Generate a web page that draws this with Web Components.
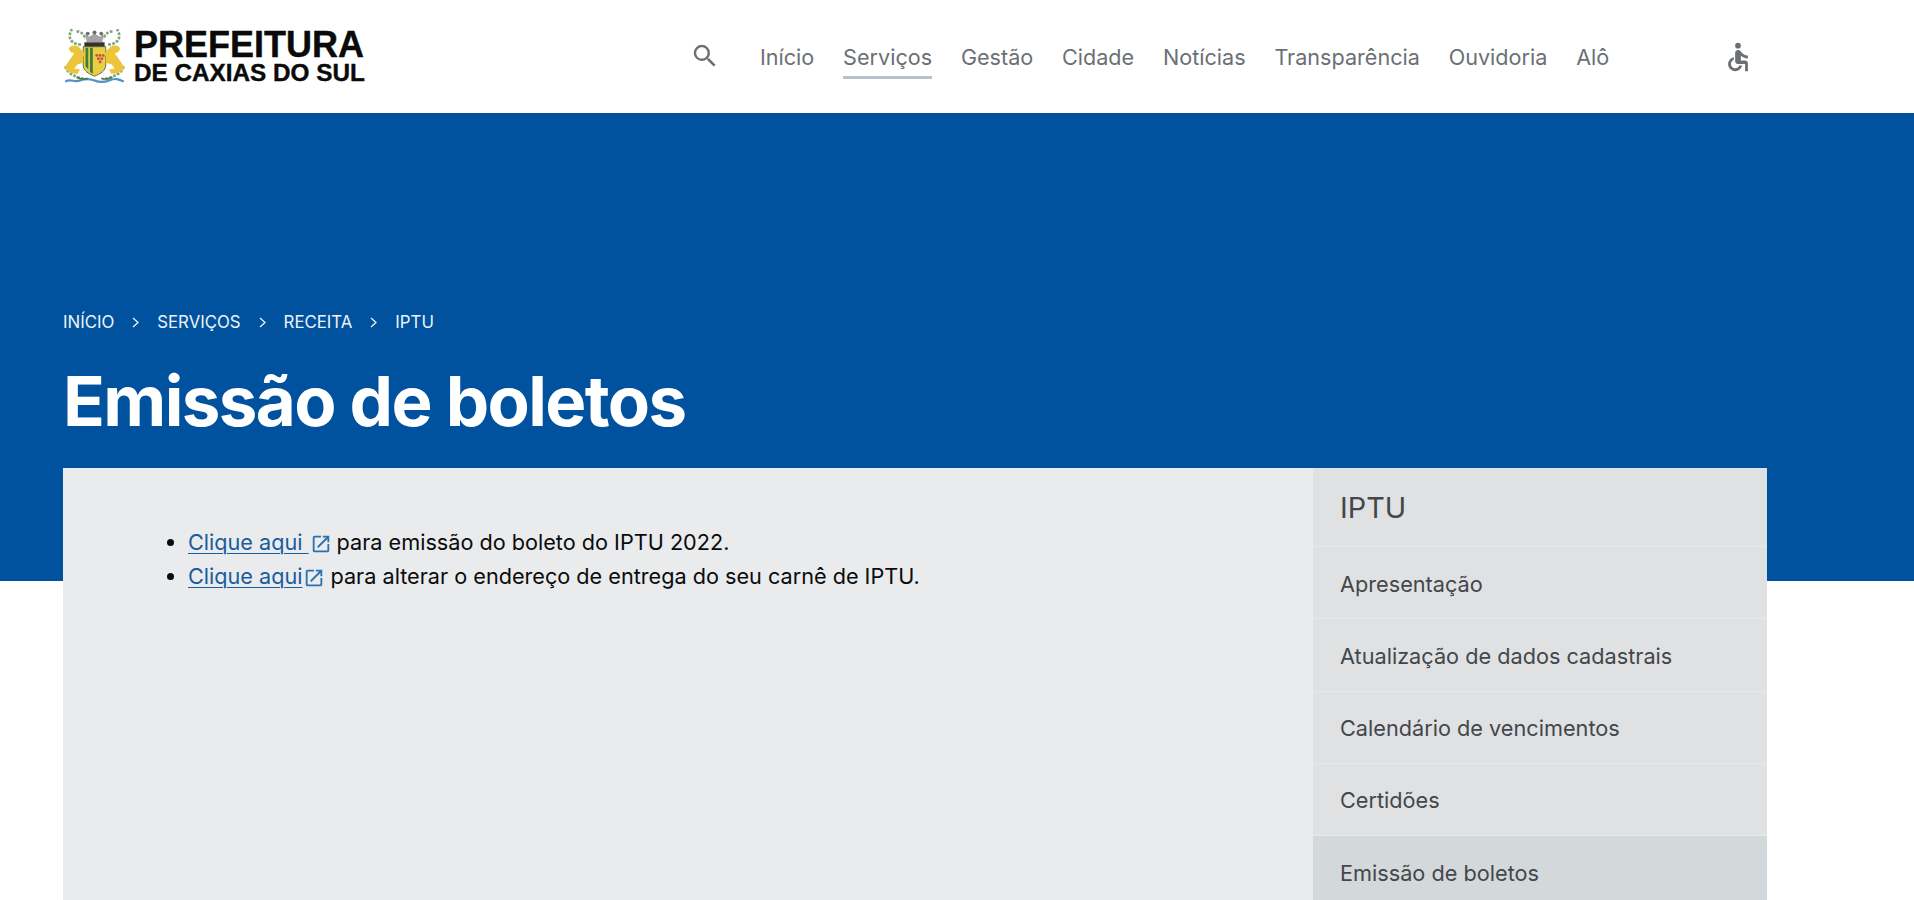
<!DOCTYPE html>
<html lang="pt-BR"><head><meta charset="utf-8"><title>Emissão de boletos</title>
<style>
html,body{margin:0;padding:0;height:900px;overflow:hidden;background:#fff;font-family:Inter,"Liberation Sans",sans-serif}
</style></head><body>
<site-header></site-header>
<page-hero></page-hero>
<content-card>
  <ul-content></ul-content>
  <side-menu slot="side"></side-menu>
</content-card>
<script>
const def=(name,html)=>customElements.define(name,class extends HTMLElement{constructor(){super();this.attachShadow({mode:'open'}).innerHTML=html}});
def('site-logo',`<style>
:host{display:flex;align-items:center;width:302px;height:113px;font-family:"Liberation Sans",Arial,sans-serif;color:#0a0a0a;flex:none}
svg{width:63px;height:59px;flex:none;margin-right:8px;filter:blur(.35px)}
.t{display:flex;flex-direction:column;font-weight:700;white-space:nowrap;-webkit-text-stroke:.4px #0a0a0a;padding-top:2px}
.a{font-size:36px;line-height:31px}.b{font-size:24.300px;line-height:26px}
</style>
<svg viewBox="3 1 56 54" preserveAspectRatio="none">
<g fill="none" stroke="#7fa67f" stroke-width="2.400" stroke-dasharray="2.500 1.200">
<path d="M19 17C11 17 6 11 11 3"/><path d="M43 17c8 0 13-6 8-14"/><path d="M15 5c4 0 7 3 8 7"/><path d="M47 5c-4 0-7 3-8 7"/>
<path d="M5 37c2 7 10 10 18 12"/><path d="M57 37c-2 7-10 10-18 12"/></g>
<path d="M23 7l3 3 5-3 5 3 3-3-1 8H24z" fill="#a3a4a6"/><circle cx="25" cy="7" r="1.700" fill="#6d6e72"/><circle cx="31" cy="6" r="1.800" fill="#6d6e72"/><circle cx="37" cy="7" r="1.700" fill="#6d6e72"/>
<path d="M22 15h18v5H22z" fill="#333"/>
<path d="M21 19h20v17c0 5-5 8-10 10-5-2-10-5-10-10z" fill="#e6cf45" stroke="#5a6438" stroke-width=".8"/>
<path d="M23 20h2.500v20l-2.500-3zM27 20h2.500v24l-2.500-2z" fill="#3f7d3c"/>
<g fill="#c9503f"><circle cx="33" cy="27" r="1.300"/><circle cx="36" cy="27" r="1.300"/><circle cx="39" cy="27" r="1.300"/><circle cx="34.500" cy="30" r="1.300"/><circle cx="37.500" cy="30" r="1.300"/><circle cx="36" cy="33" r="1.300"/></g>
<path d="M17 19c-4-2-8-1-9 2l2 3 3 1-4 6-4 6c-1 3 2 5 5 6l6 1 2-4-5-1 3-4 5-1 0-6 2-2z" fill="#ecc53a"/>
<path d="M45 19c4-2 8-1 9 2l-2 3-3 1 4 6 4 6c1 3-2 5-5 6l-6 1-2-4 5-1-3-4-5-1 0-6-2-2z" fill="#ecc53a"/>
<path d="M5 51c5-3 8 1 13-1s8-2 13 0 8 2 13 0 8-2 13 1" fill="none" stroke="#4f91c8" stroke-width="2"/>
<path d="M15 47c4 2 7 2 10 1M47 47c-4 2-7 2-10 1" fill="none" stroke="#4d7a4d" stroke-width="1.500"/>
</svg>
<div class="t"><span class="a">PREFEITURA</span><span class="b">DE CAXIAS DO SUL</span></div>`);
def('nav-link',`<style>
:host{display:block;font-size:21.600px;line-height:30px;color:#6b7075;padding-bottom:4px;border-bottom:3px solid transparent;white-space:nowrap}
:host([active]){border-bottom-color:#b8c1ca}
</style><slot></slot>`);
def('site-header',`<style>
:host{display:flex;align-items:center;height:113px;padding-left:63px;background:#fff;box-sizing:border-box}
.s{width:30px;height:30px;flex:none;margin:-2px 0 0 325px;color:#6b7075}
nav{display:flex;gap:28.800px;margin-left:40px;margin-top:7px}
.w{width:34px;height:34px;flex:none;margin:1px 0 0 112px;color:#6b7075}
</style>
<site-logo></site-logo>
<svg class="s" viewBox="0 0 24 24"><path fill="currentColor" d="M15.500 14h-.79l-.28-.27A6.470 6.470 0 0 0 16 9.500 6.500 6.500 0 1 0 9.500 16c1.610 0 3.090-.59 4.230-1.570l.27.28v.79l5 4.990L20.490 19l-4.990-5zm-6 0C7.010 14 5 11.990 5 9.500S7.010 5 9.500 5 14 7.010 14 9.500 11.990 14 9.500 14z"/></svg>
<nav><nav-link>Início</nav-link><nav-link active>Serviços</nav-link><nav-link>Gestão</nav-link><nav-link>Cidade</nav-link><nav-link>Notícias</nav-link><nav-link>Transparência</nav-link><nav-link>Ouvidoria</nav-link><nav-link>Alô</nav-link></nav>
<svg class="w" viewBox="0 0 24 24"><circle cx="12" cy="4" r="2" fill="currentColor"/><path fill="currentColor" d="M19 13v-2c-1.540.02-3.090-.75-4.070-1.830l-1.290-1.430c-.17-.19-.38-.34-.61-.45-.01 0-.01-.01-.02-.01H13c-.35-.2-.75-.3-1.190-.26C10.760 7.110 10 8.040 10 9.090V15c0 1.100.9 2 2 2h5v5h2v-5.500c0-1.100-.9-2-2-2h-3v-3.450c1.290 1.070 3.250 1.940 5 1.950zm-6.170 5c-.41 1.160-1.520 2-2.830 2-1.660 0-3-1.340-3-3 0-1.310.84-2.410 2-2.830V12.100c-2.280.46-4 2.480-4 4.900 0 2.760 2.240 5 5 5 2.420 0 4.440-1.720 4.900-4h-2.070z"/></svg>`);
const chev=`<svg viewBox="0 0 9 13"><path d="M2 2l5 4.500-5 4.500" fill="none" stroke="#eef3f8" stroke-width="1.300"/></svg>`;
def('page-hero',`<style>
:host{display:block;height:468px;background:#00529e;color:#fff;box-sizing:border-box;padding:197px 0 0 63px;margin-bottom:-113px}
.c{display:flex;align-items:center;font-size:16.800px;line-height:24px;color:#eef3f8;height:24px}
.c svg{width:9px;height:13px;margin:0 17px}
h1{margin:25px 0 0;font-size:69px;line-height:84px;font-weight:700;letter-spacing:-1.620px}
</style>
<div class="c"><span>INÍCIO</span>${chev}<span>SERVIÇOS</span>${chev}<span>RECEITA</span>${chev}<span>IPTU</span></div>
<h1>Emissão de boletos</h1>`);
def('content-card',`<style>
:host{display:grid;grid-template-columns:1fr 454px;width:1704px;margin-left:63px;height:432px;background:#e9ebed;overflow:hidden;position:relative}
</style><div><slot></slot></div><slot name="side"></slot>`);
const ext=(l,r)=>`<svg style="margin-left:${l}px;margin-right:${r}px" viewBox="0 0 24 24"><path fill="#2d72ad" d="M19 19H5V5h7V3H5a2 2 0 0 0-2 2v14a2 2 0 0 0 2 2h14c1.100 0 2-.9 2-2v-7h-2v7zM14 3v2h3.590l-9.830 9.830 1.410 1.410L19 6.410V10h2V3h-7z"/></svg>`;
def('ul-content',`<style>
:host{display:block;color:#0b0b0b;font-size:21.650px;line-height:34px}
ul{margin:0;padding:57px 0 0 125px}
a{color:#1a5c9c;text-decoration:underline;text-underline-offset:3px;text-decoration-thickness:1px}
svg{width:22px;height:22px;vertical-align:-5px}
</style><ul><li><a href="#">Clique aqui </a>${ext(1,5)}para emissão do boleto do IPTU 2022.</li><li><a href="#">Clique aqui</a>${ext(1,5)}para alterar o endereço de entrega do seu carnê de IPTU.</li></ul>`);
def('menu-item',`<style>
:host{display:flex;align-items:center;box-sizing:border-box;height:72.250px;padding:2px 0 0 27px;font-size:21.700px;color:#43474b;border-bottom:1px solid #e6e8ea;background:#dfe1e3}
:host([active]){background:#d3d8db;border-bottom-color:#d3d8db}
:host([head]){font-size:28.800px;height:79px;padding-top:0;color:#43474b}
</style><slot></slot>`);
def('side-menu',`<style>:host{display:block;background:#dfe1e3}</style>
<menu-item head>IPTU</menu-item><menu-item>Apresentação</menu-item><menu-item>Atualização de dados cadastrais</menu-item><menu-item>Calendário de vencimentos</menu-item><menu-item>Certidões</menu-item><menu-item active>Emissão de boletos</menu-item>`);
</script></body></html>
